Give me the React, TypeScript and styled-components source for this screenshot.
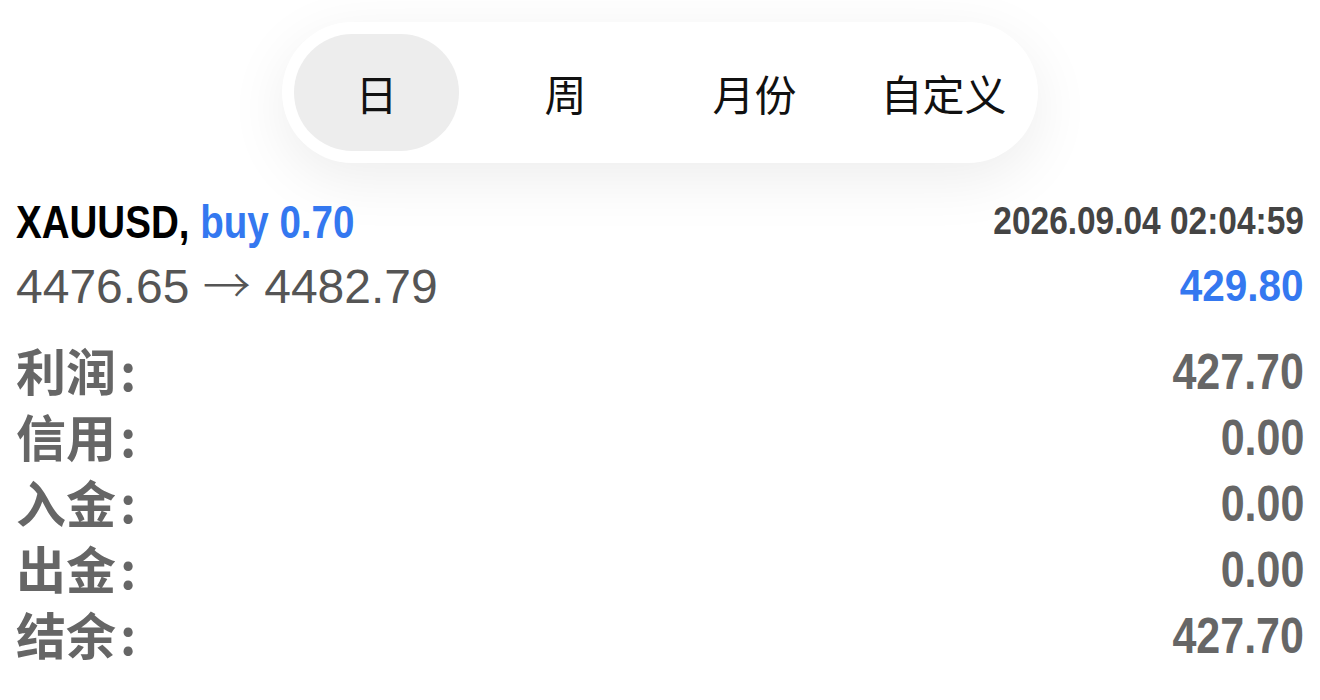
import React from 'react';
import styled, { createGlobalStyle } from 'styled-components';

const GlobalStyle = createGlobalStyle`
  html, body {
    margin: 0;
    padding: 0;
    background: #ffffff;
  }
  body {
    font-family: "Liberation Sans", "Noto Sans CJK SC", sans-serif;
  }
`;

const Page = styled.div`
  display: flex;
  flex-direction: column;
  padding: 22px 16px 0;
  width: 1320px;
  box-sizing: border-box;
`;

const TabBar = styled.div`
  align-self: center;
  display: grid;
  grid-template-columns: repeat(4, 189px);
  height: 141px;
  background: #ffffff;
  border-radius: 71px;
  box-shadow: 0 16px 60px rgba(0, 0, 0, 0.075);
`;

const Tab = styled.div<{ $active?: boolean }>`
  display: flex;
  align-items: center;
  justify-content: center;
  margin: 12px;
  border-radius: 60px;
  background: ${(p) => (p.$active ? '#ededed' : 'transparent')};
  font-family: "Noto Sans CJK SC", sans-serif;
  font-weight: 400;
  font-size: 42px;
  color: #111;
`;

const TradeHeader = styled.div`
  display: flex;
  justify-content: space-between;
  align-items: center;
  margin-top: 28px;
  height: 60px;
`;

// no condensed face installed: squeeze the bold sans horizontally
const Condensed = styled.span<{ $scale: number; $origin?: 'left' | 'right' }>`
  display: inline-block;
  white-space: nowrap;
  font-family: "Liberation Sans", sans-serif;
  font-weight: 700;
  transform: scaleX(${(p) => p.$scale});
  transform-origin: ${(p) => p.$origin ?? 'right'} center;
`;

const Symbol = styled(Condensed)`
  font-size: 47px;
  color: #000;
`;

const Side = styled.span`
  color: #3478f0;
`;

const Stamp = styled(Condensed)`
  font-size: 38px;
  color: #444;
`;

const PriceRow = styled.div`
  display: flex;
  justify-content: space-between;
  align-items: center;
  height: 62px;
`;

const Prices = styled.div`
  font-family: "Liberation Sans", sans-serif;
  font-size: 48px;
  color: #555;
`;

const Arrow = styled.span`
  font-family: "Noto Sans CJK SC", sans-serif;
  font-weight: 300;
`;

const Amount = styled(Condensed)<{ $blue?: boolean }>`
  margin-top: ${(p) => (p.$blue ? '8px' : '6px')};
  font-size: ${(p) => (p.$blue ? '44px' : '50px')};
  color: ${(p) => (p.$blue ? '#3478f0' : '#666')};
`;

const Summary = styled.div`
  display: flex;
  flex-direction: column;
  margin-top: 23px;
`;

const SummaryRow = styled.div`
  display: flex;
  justify-content: space-between;
  align-items: center;
  height: 66px;
`;

const Label = styled.div`
  font-family: "Noto Sans CJK SC", sans-serif;
  font-weight: 700;
  font-size: 50px;
  color: #666;

  span {
    margin-left: 4px;
  }
`;

const tabs = ['日', '周', '月份', '自定义'];

const rows = [
  { label: '利润', value: '427.70' },
  { label: '信用', value: '0.00' },
  { label: '入金', value: '0.00' },
  { label: '出金', value: '0.00' },
  { label: '结余', value: '427.70' },
];

export default function App() {
  return (
    <>
      <GlobalStyle />
      <Page>
        <TabBar>
          {tabs.map((t, i) => (
            <Tab key={t} $active={i === 0}>
              {t}
            </Tab>
          ))}
        </TabBar>

        <TradeHeader>
          <Symbol $scale={0.82} $origin="left">
            XAUUSD, <Side>buy 0.70</Side>
          </Symbol>
          <Stamp $scale={0.88}>2026.09.04 02:04:59</Stamp>
        </TradeHeader>

        <PriceRow>
          <Prices>
            4476.65 <Arrow>→</Arrow> 4482.79
          </Prices>
          <Amount $blue $scale={0.92}>
            429.80
          </Amount>
        </PriceRow>

        <Summary>
          {rows.map((r) => (
            <SummaryRow key={r.label}>
              <Label>
                {r.label}
                <span>:</span>
              </Label>
              <Amount $scale={0.86}>{r.value}</Amount>
            </SummaryRow>
          ))}
        </Summary>
      </Page>
    </>
  );
}
